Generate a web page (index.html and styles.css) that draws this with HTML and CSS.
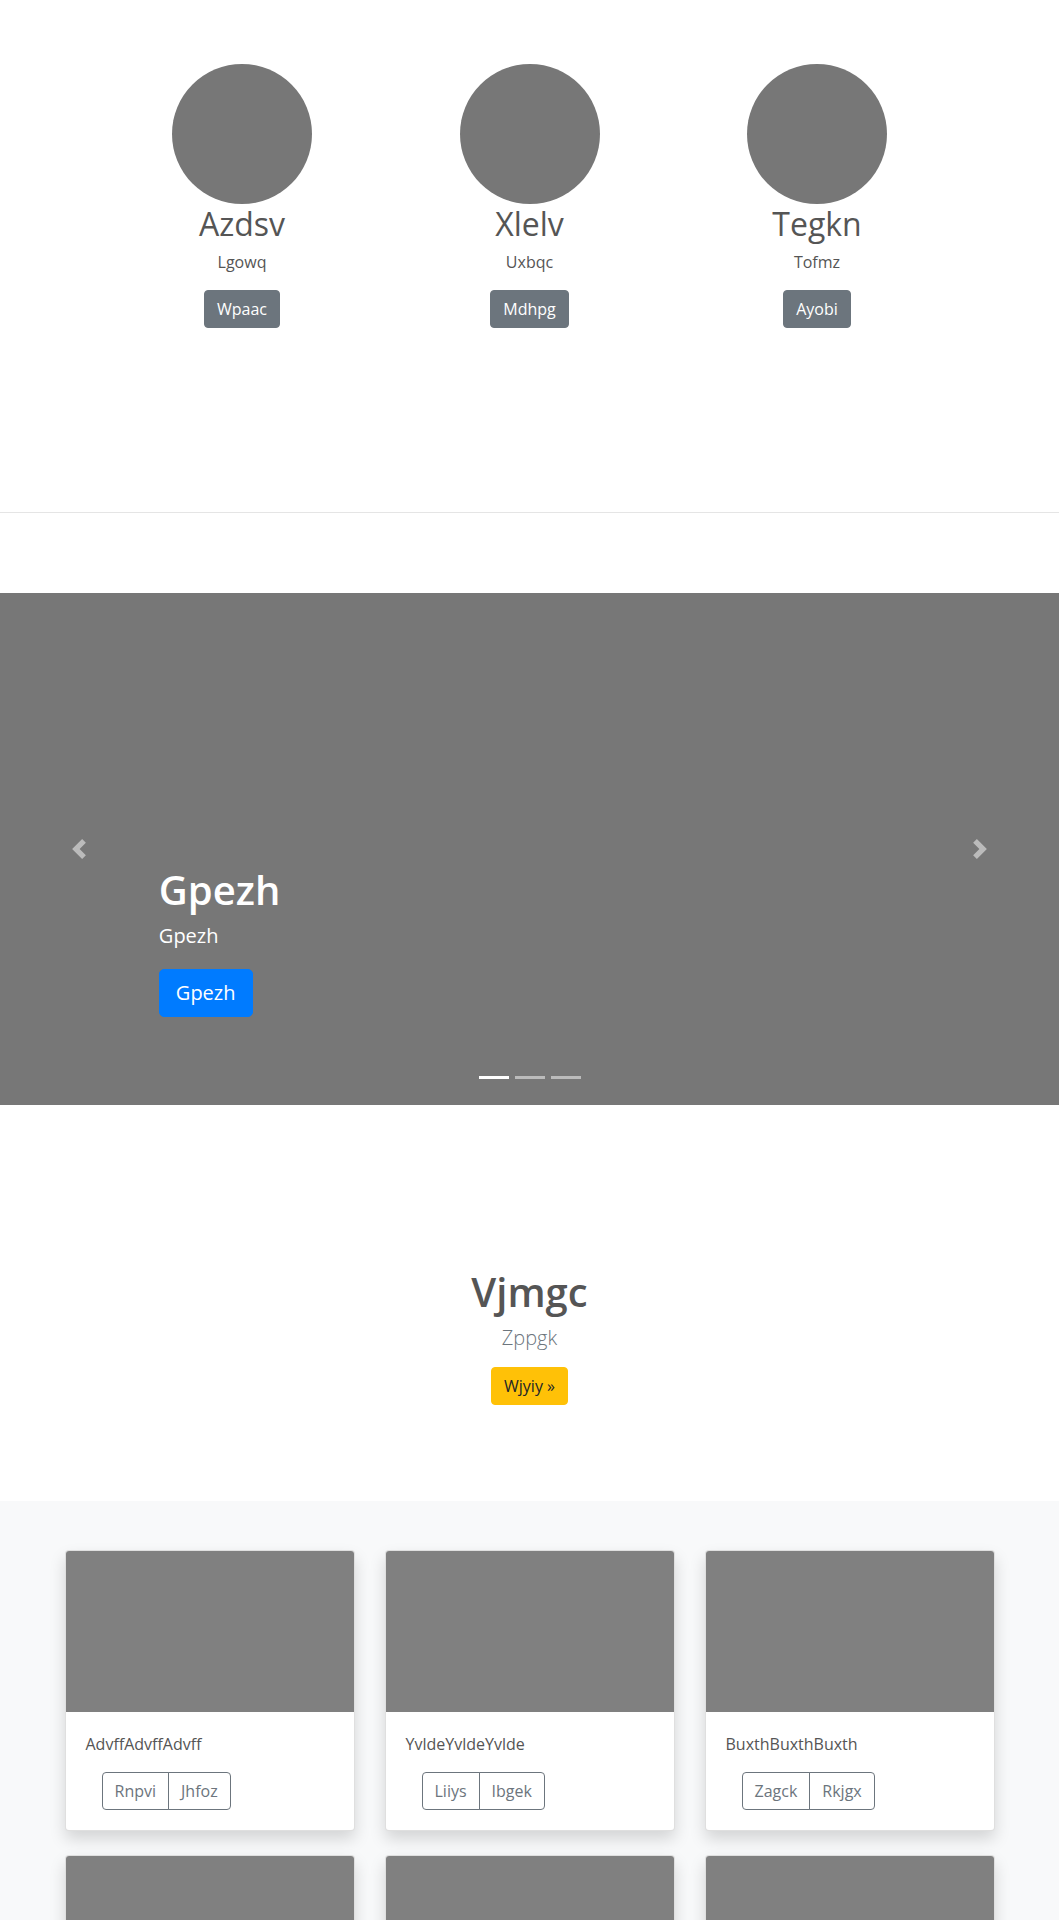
FILE: index.html
```html
<!DOCTYPE html>
<html lang="en">
<head>
<meta charset="utf-8">
<title>Team</title>
<link rel="stylesheet" href="styles.css">
</head>
<body>
<section class="team">
  <div class="team-row">
    <div class="member">
      <div class="avatar"></div>
      <h2 class="member-name">Azdsv</h2>
      <p class="member-role">Lgowq</p>
      <a class="btn btn-secondary" href="#">Wpaac</a>
    </div>
    <div class="member">
      <div class="avatar"></div>
      <h2 class="member-name">Xlelv</h2>
      <p class="member-role">Uxbqc</p>
      <a class="btn btn-secondary" href="#">Mdhpg</a>
    </div>
    <div class="member">
      <div class="avatar"></div>
      <h2 class="member-name">Tegkn</h2>
      <p class="member-role">Tofmz</p>
      <a class="btn btn-secondary" href="#">Ayobi</a>
    </div>
  </div>
</section>
<hr class="divider">
<section class="carousel">
  <a class="carousel-control prev" href="#">
    <svg class="control-icon" viewBox="0 0 8 8" width="20" height="20"><path d="M5.25 0l-4 4 4 4 1.5-1.5L4.25 4l2.5-2.5L5.25 0z"/></svg>
  </a>
  <div class="carousel-caption">
    <h1 class="caption-title">Gpezh</h1>
    <p class="caption-text">Gpezh</p>
    <a class="btn btn-lg btn-primary" href="#">Gpezh</a>
  </div>
  <a class="carousel-control next" href="#">
    <svg class="control-icon" viewBox="0 0 8 8" width="20" height="20"><path d="M2.75 0l-1.5 1.5L3.75 4l-2.5 2.5L2.75 8l4-4-4-4z"/></svg>
  </a>
  <ol class="indicators">
    <li class="indicator active"></li>
    <li class="indicator"></li>
    <li class="indicator"></li>
  </ol>
</section>
<section class="hero">
  <h1 class="hero-title">Vjmgc</h1>
  <p class="hero-lead">Zppgk</p>
  <a class="btn btn-warning" href="#">Wjyiy »</a>
</section>
<section class="album">
  <div class="card-grid">
    <div class="card">
      <div class="card-img"></div>
      <div class="card-body">
        <p class="card-text">AdvffAdvffAdvff</p>
        <div class="btn-group">
          <a class="btn btn-outline" href="#">Rnpvi</a><a class="btn btn-outline" href="#">Jhfoz</a>
        </div>
      </div>
    </div>
    <div class="card">
      <div class="card-img"></div>
      <div class="card-body">
        <p class="card-text">YvldeYvldeYvlde</p>
        <div class="btn-group">
          <a class="btn btn-outline" href="#">Liiys</a><a class="btn btn-outline" href="#">Ibgek</a>
        </div>
      </div>
    </div>
    <div class="card">
      <div class="card-img"></div>
      <div class="card-body">
        <p class="card-text">BuxthBuxthBuxth</p>
        <div class="btn-group">
          <a class="btn btn-outline" href="#">Zagck</a><a class="btn btn-outline" href="#">Rkjgx</a>
        </div>
      </div>
    </div>
    <div class="card">
      <div class="card-img"></div>
    </div>
    <div class="card">
      <div class="card-img"></div>
    </div>
    <div class="card">
      <div class="card-img"></div>
    </div>
  </div>
</section>
</body>
</html>
```
FILE: styles.css
```css
* { box-sizing: border-box; }

body {
  margin: 0;
  font-family: "Open Sans", "Noto Sans", sans-serif;
  font-size: 16px;
  line-height: 1.5;
  color: #555;
  background: #fff;
}

.btn {
  display: inline-block;
  font-size: 16px;
  line-height: 24px;
  padding: 6px 12px;
  border: 1px solid transparent;
  border-radius: 4px;
  text-decoration: none;
  font-weight: 400;
  white-space: nowrap;
}
.btn-secondary { background: #6c757d; border-color: #6c757d; color: #fff; }
.btn-primary { background: #007bff; border-color: #007bff; color: #fff; }
.btn-warning { background: #ffc107; border-color: #ffc107; color: #212529; }
.btn-lg { font-size: 20px; line-height: 30px; padding: 8px 16px; border-radius: 5px; }
.btn-outline { background: transparent; border-color: #6c757d; color: #6c757d; }

/* Team */
.team { padding: 64px 0 184px; }
.team-row {
  display: grid;
  grid-template-columns: repeat(3, 287.5px);
  justify-content: center;
}
.member {
  display: flex;
  flex-direction: column;
  align-items: center;
  text-align: center;
}
.avatar {
  width: 140px;
  height: 140px;
  border-radius: 50%;
  background: #777;
}
.member-name {
  margin: 1px 0 7px;
  font-size: 32px;
  line-height: 38px;
  font-weight: 400;
}
.member-role { margin: 0 0 16px; }

.divider {
  margin: 0;
  border: 0;
  border-top: 1px solid rgba(0,0,0,.1);
  height: 0;
}

/* Carousel */
.carousel {
  position: relative;
  margin-top: 80px;
  height: 512px;
  background: #777;
}
.carousel-control {
  position: absolute;
  top: 0;
  bottom: 0;
  width: 15%;
  display: flex;
  align-items: center;
  justify-content: center;
  opacity: .5;
}
.carousel-control.prev { left: 0; }
.carousel-control.next { right: 0; }
.control-icon { fill: #fff; display: block; }
.carousel-caption {
  position: absolute;
  left: 15%;
  right: 15%;
  bottom: 88px;
  color: #fff;
  text-align: left;
}
.caption-title {
  margin: 0 0 7px;
  font-size: 40px;
  line-height: 48px;
  font-weight: 600;
}
.caption-text {
  margin: 0 0 18px;
  font-size: 20px;
  line-height: 30px;
}
.indicators {
  position: absolute;
  left: 0;
  right: 0;
  bottom: 26px;
  margin: 0;
  padding: 0;
  list-style: none;
  display: flex;
  justify-content: center;
  gap: 6px;
}
.indicator {
  width: 30px;
  height: 3px;
  background: #fff;
  opacity: .5;
}
.indicator.active { opacity: 1; }

/* Hero */
.hero {
  padding: 163px 0 96px;
  text-align: center;
}
.hero-title {
  margin: 0 0 7px;
  font-size: 40px;
  line-height: 48px;
  font-weight: 600;
  color: #555;
}
.hero-lead {
  margin: 0 0 14px;
  font-size: 20px;
  line-height: 30px;
  font-weight: 300;
  color: #6c757d;
}

/* Album */
.album {
  background: #f8f9fa;
  padding: 49px 0 48px;
}
.card-grid {
  display: grid;
  grid-template-columns: repeat(3, 290px);
  column-gap: 30px;
  row-gap: 24px;
  justify-content: center;
}
.card {
  background: #fff;
  border: 1px solid rgba(0,0,0,.125);
  border-radius: 4px;
  box-shadow: 0 8px 16px rgba(0,0,0,.15);
  overflow: hidden;
}
.card-img {
  height: 161px;
  background: #808080;
}
.card-body { padding: 20px; }
.card-text { margin: 0 0 16px; }
.btn-group {
  display: inline-flex;
  margin-left: 16px;
}
.btn-group .btn:first-child { border-top-right-radius: 0; border-bottom-right-radius: 0; }
.btn-group .btn + .btn { margin-left: -1px; border-top-left-radius: 0; border-bottom-left-radius: 0; }
```
